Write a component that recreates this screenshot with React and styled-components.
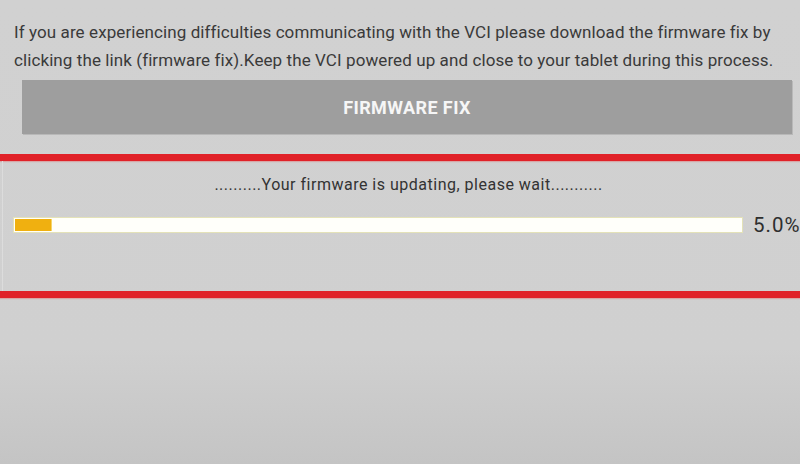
import React from "react";
import styled, { createGlobalStyle } from "styled-components";

const GlobalStyle = createGlobalStyle`
  html, body {
    margin: 0;
    padding: 0;
    height: 100%;
  }
  body {
    background: linear-gradient(#d1d1d1 0%, #d0d0d0 75%, #c4c4c4 100%);
    font-family: Roboto, "Liberation Sans", sans-serif;
    overflow: hidden;
  }
`;

const Page = styled.div`
  width: 800px;
  height: 464px;
  display: flex;
  flex-direction: column;
`;

const Intro = styled.p`
  margin: 0;
  padding: 18px 0 0 14px;
  font-size: 17px;
  letter-spacing: 0.09px;
  line-height: 28px;
  color: #3a3a3a;
  white-space: nowrap;
`;

const FixButton = styled.button`
  margin: 6px 8px 0 22px;
  height: 54px;
  border: none;
  background: #9e9e9e;
  color: #f6f6f6;
  font-family: Roboto, "Liberation Sans", sans-serif;
  font-weight: 700;
  font-size: 18px;
  letter-spacing: 0.4px;
  box-shadow: 1px 1px 0 #b8b8b8;
`;

const RedRule = styled.div`
  height: 7px;
  background: #e02128;
  box-shadow: 0 1px 1px rgba(230, 90, 90, 0.35);
  margin-top: ${(p) => p.$top || 0}px;
`;

const Panel = styled.div`
  height: 130px;
  border-left: 1px solid #dcdcdc;
  margin-left: 2px;
  display: flex;
  flex-direction: column;
`;

const Status = styled.div`
  margin-top: 14px;
  text-align: center;
  font-size: 16px;
  letter-spacing: 0.5px;
  line-height: 20px;
  color: #333;
  padding-left: 14px;
`;

const ProgressRow = styled.div`
  margin-top: 18px;
  padding-left: 10px;
  display: flex;
  align-items: center;
  gap: 10px;
`;

const Track = styled.div`
  flex: 0 0 730px;
  height: 16px;
  box-sizing: border-box;
  background: #fffffa;
  border: 1px solid #e4e2b8;
  padding: 1px;
  display: flex;
`;

const Fill = styled.div`
  height: 100%;
  background: #f0b010;
  border-right: 1px solid #f5d56a;
`;

const Percent = styled.span`
  font-size: 20.5px;
  letter-spacing: 1px;
  color: #2e2e2e;
  white-space: nowrap;
`;

const App = () => {
  const progress = 5.0;
  return (
    <>
      <GlobalStyle />
      <Page>
        <Intro>
          If you are experiencing difficulties communicating with the VCI please
          download the firmware fix by
          <br />
          clicking the link (firmware fix).Keep the VCI powered up and close to
          your tablet during this process.
        </Intro>
        <FixButton>FIRMWARE FIX</FixButton>
        <RedRule $top={20} />
        <Panel>
          <Status>
            ..........Your firmware is updating, please wait...........
          </Status>
          <ProgressRow>
            <Track>
              <Fill style={{ width: `${progress}%` }} />
            </Track>
            <Percent>{progress.toFixed(1)}%</Percent>
          </ProgressRow>
        </Panel>
        <RedRule />
      </Page>
    </>
  );
};

export default App;
